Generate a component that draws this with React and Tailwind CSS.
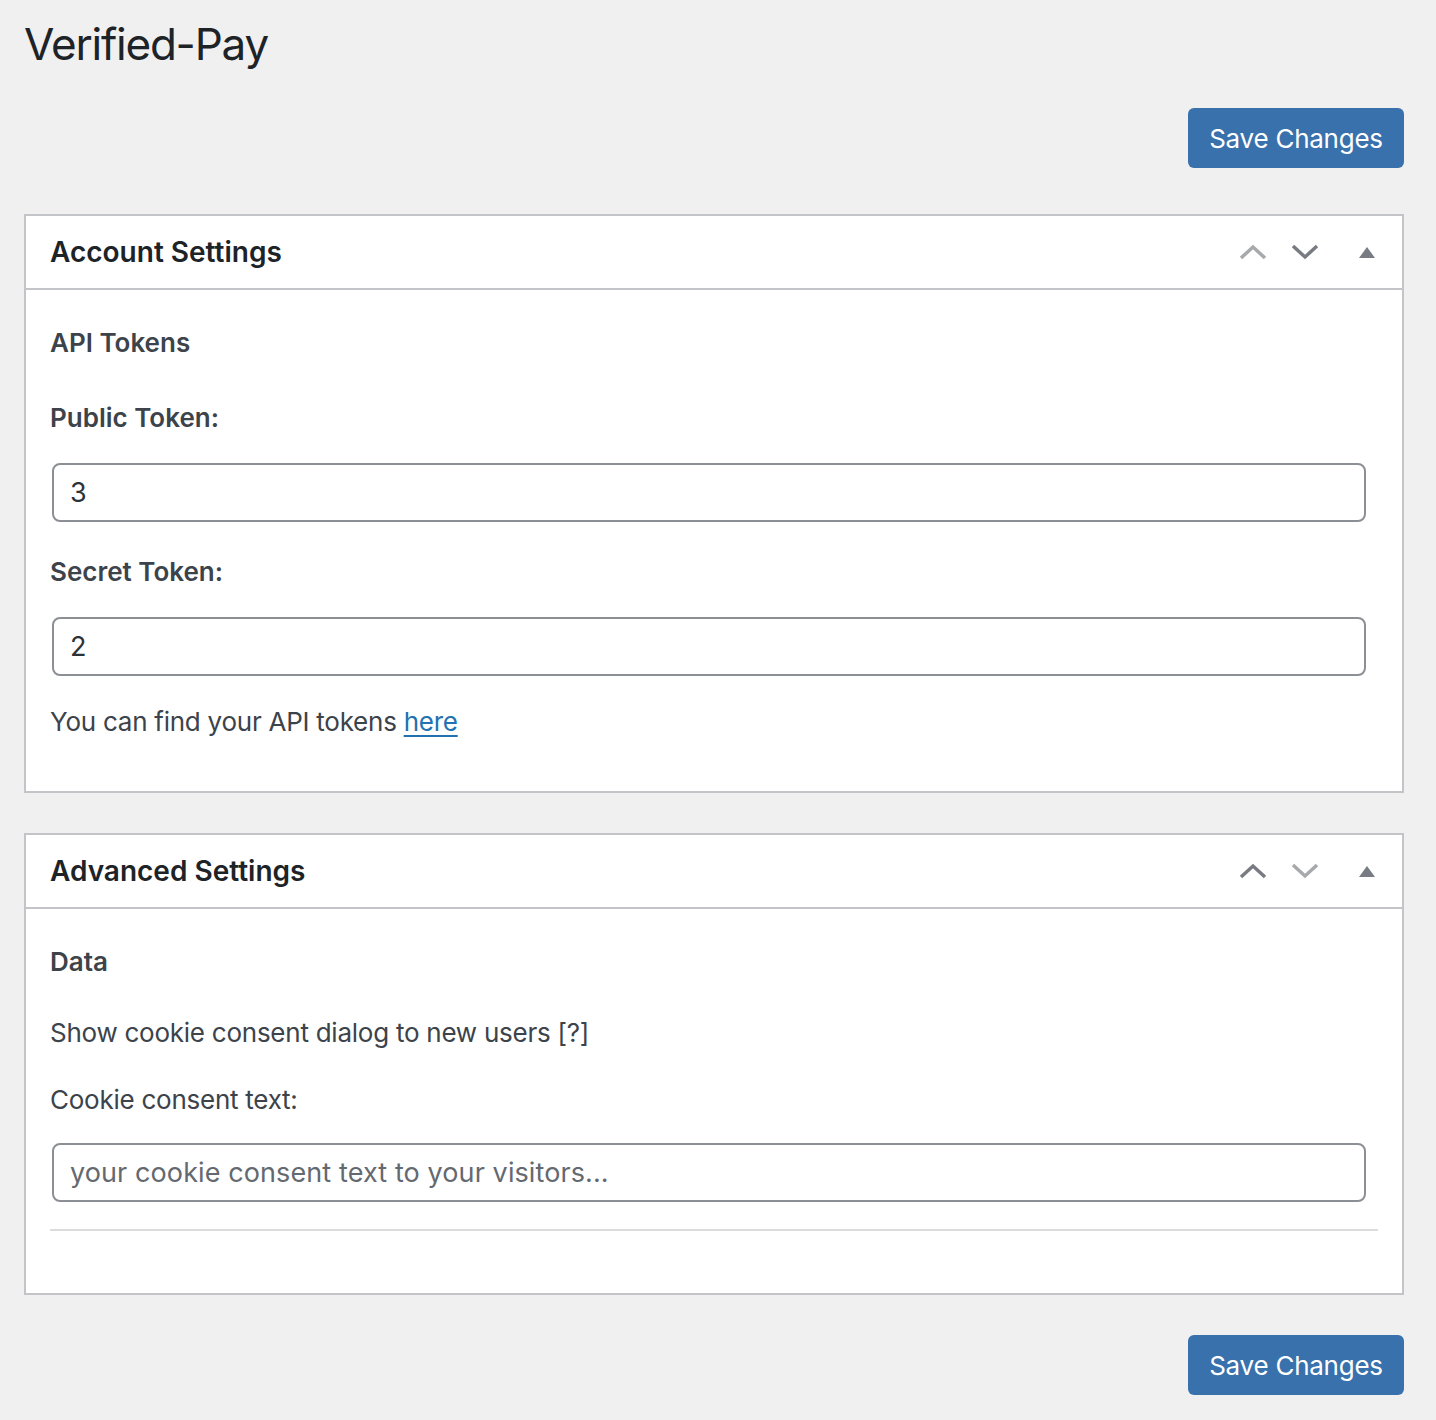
import React from "react";

const font = { fontFamily: "Inter, 'Noto Sans', 'Liberation Sans', sans-serif" };

function ChevUp({ color }) {
  return (
    <svg width="30" height="20" viewBox="0 0 30 20" fill="none">
      <path d="M3 16 L15 5 L27 16" stroke={color} strokeWidth="3.5" />
    </svg>
  );
}
function ChevDown({ color }) {
  return (
    <svg width="30" height="20" viewBox="0 0 30 20" fill="none">
      <path d="M3 4 L15 15 L27 4" stroke={color} strokeWidth="3.5" />
    </svg>
  );
}
function Tri() {
  return (
    <svg width="18" height="12" viewBox="0 0 18 12">
      <path d="M1 12 L9 1 L17 12 Z" fill="#787c82" />
    </svg>
  );
}

function SaveButton() {
  return (
    <div className="flex justify-end">
      <button className="h-[60px] w-[216px] rounded-[6px] bg-[#3871ac] text-white text-[26px] tracking-[-0.25px] leading-none pt-[2px]">
        Save Changes
      </button>
    </div>
  );
}

function Panel({ title, upColor, downColor, children }) {
  return (
    <div className="border-2 border-[#c3c4c7] bg-white">
      <div className="h-[74px] border-b-2 border-[#c3c4c7] flex items-center justify-between pl-[24px] pr-[26px]">
        <h2 className="text-[28px] font-semibold text-[#1d2327]">{title}</h2>
        <div className="flex items-center">
          <ChevUp color={upColor} />
          <div className="w-[22px]" />
          <ChevDown color={downColor} />
          <div className="w-[38px]" />
          <Tri />
        </div>
      </div>
      {children}
    </div>
  );
}

function Label({ children, bold, className = "" }) {
  return (
    <div
      className={`h-[36px] leading-[36px] text-[26px] text-[#3c434a] ${bold ? "font-semibold" : "tracking-[-0.25px]"} ${className}`}
    >
      {children}
    </div>
  );
}

function Input({ value, placeholder, className = "" }) {
  return (
    <input
      readOnly
      value={value}
      placeholder={placeholder}
      className={`block h-[59px] w-[1314px] rounded-[8px] border-2 border-[#8c8f94] px-[16px] text-[27px] tracking-[0.1px] text-[#2c3338] placeholder:text-[#646970] outline-none ${className}`}
      style={font}
    />
  );
}

export default function App() {
  return (
    <div className="min-h-[1420px] bg-[#f0f0f1] pl-[24px] pr-[32px]" style={font}>
      <h1 className="pt-[16px] text-[44px] tracking-[-1.2px] leading-[56px] text-[#1d2327] font-normal">Verified-Pay</h1>
      <div className="mt-[36px]">
        <SaveButton />
      </div>
      <div className="mt-[46px]">
        <Panel title="Account Settings" upColor="#a7aaad" downColor="#787c82">
          <div className="px-[24px] pt-[35px] pb-[51px]">
            <Label bold>API Tokens</Label>
            <Label bold className="mt-[39px]">Public Token:</Label>
            <Input value="3" className="mt-[27px] ml-[2px]" />
            <Label bold className="mt-[32px]">Secret Token:</Label>
            <Input value="2" className="mt-[27px] ml-[2px]" />
            <Label className="mt-[28px]">
              You can find your API tokens{" "}
              <a href="#" className="text-[#2271b1] underline underline-offset-[4px]">here</a>
            </Label>
          </div>
        </Panel>
      </div>
      <div className="mt-[40px]">
        <Panel title="Advanced Settings" upColor="#787c82" downColor="#a7aaad">
          <div className="px-[24px] pt-[35px] pb-[62px]">
            <Label bold>Data</Label>
            <Label className="mt-[35px]">Show cookie consent dialog to new users [?]</Label>
            <Label className="mt-[31px]">Cookie consent text:</Label>
            <Input value="" placeholder="your cookie consent text to your visitors..." className="mt-[25px] ml-[2px]" />
            <div className="mt-[27px] h-[2px] bg-[#dcdcde]" />
          </div>
        </Panel>
      </div>
      <div className="mt-[40px] pb-[26px]">
        <SaveButton />
      </div>
    </div>
  );
}
